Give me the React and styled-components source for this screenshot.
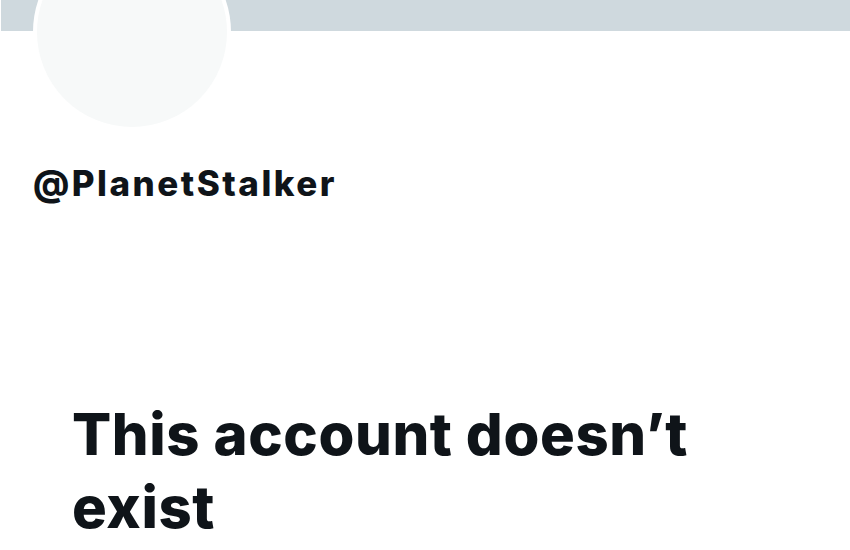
import styled, { createGlobalStyle } from "styled-components";

const GlobalStyle = createGlobalStyle`
    html, body {
        margin: 0;
        padding: 0;
        background: #ffffff;
    }
    body {
        font-family: "Inter", "Noto Sans", sans-serif;
        color: #0f1419;
    }
`;

const Page = styled.div`
    width: 850px;
    height: 550px;
    overflow: hidden;
    background: #ffffff;
`;

const Banner = styled.div`
    height: 31px;
    margin-left: 1px;
    background-color: #cfd9de;
`;

const Header = styled.div`
    padding-left: 33px;
`;

const Avatar = styled.div`
    width: 190px;
    height: 190px;
    margin-top: -98px;
    border: 4px solid #ffffff;
    border-radius: 50%;
    background-color: #f7f9f9;
    position: relative;
`;

const Handle = styled.div`
    margin-top: 32px;
    font-size: 35px;
    font-weight: 800;
    line-height: 40px;
    letter-spacing: 2.5px;
`;

const Message = styled.h1`
    margin: 195px 0 0 72px;
    width: 700px;
    font-size: 58px;
    font-weight: 800;
    line-height: 73px;
    letter-spacing: 0.6px;
`;

const App = () => {
    return (
        <>
            <GlobalStyle />
            <Page>
                <Banner />
                <Header>
                    <Avatar />
                    <Handle>@PlanetStalker</Handle>
                </Header>
                <Message>This account doesn’t exist</Message>
            </Page>
        </>
    )
}

export default App
